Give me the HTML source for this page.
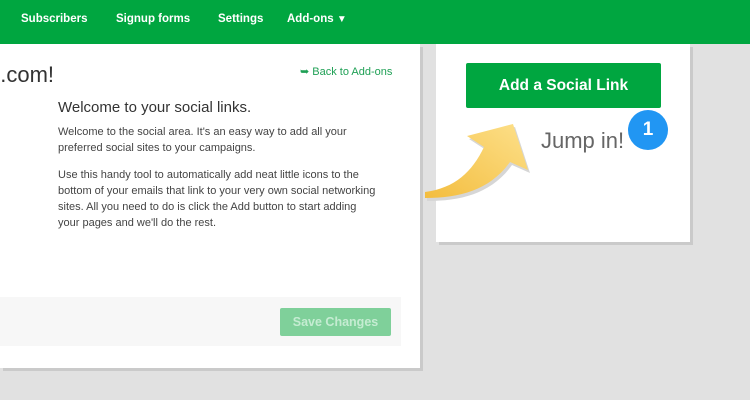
<!DOCTYPE html>
<html><head><style>
body{margin:0;width:750px;height:400px;background:#e1e1e1;position:relative;overflow:hidden;font-family:"Liberation Sans",Arial,sans-serif}
.hdr{position:absolute;left:0;top:0;width:750px;height:44px;background:#00a640}
.hdr span{position:absolute;top:13px;color:#fff;font-weight:bold;font-size:11.5px}
.lp{position:absolute;left:0;top:44px;width:420px;height:324px;background:#fff;box-shadow:3px 3px 0 #cacaca}
.rp{position:absolute;left:436px;top:44px;width:254px;height:198px;background:#fff;box-shadow:3px 3px 0 #cacaca}
p{margin:0}
</style></head><body>
<div class="hdr">
<span style="left:21px">Subscribers</span>
<span style="left:116px">Signup forms</span>
<span style="left:218px">Settings</span>
<span style="left:287px">Add-ons <span style="position:static;font-size:10px">▼</span></span>
</div>
<div class="lp">
<div style="position:absolute;left:-12px;top:18px;font-size:22px;color:#333">g.com!</div>
<div style="position:absolute;left:300px;top:21px;font-size:11px;color:#1fa055">➥ Back to Add-ons</div>
<div style="position:absolute;left:58px;top:55px;font-size:15px;color:#333">Welcome to your social links.</div>
<div style="position:absolute;left:58px;top:80px;width:320px;font-size:11px;line-height:16px;color:#444">
<p>Welcome to the social area. It's an easy way to add all your preferred social sites to your campaigns.</p>
<p style="margin-top:11px">Use this handy tool to automatically add neat little icons to the bottom of your emails that link to your very own social networking sites. All you need to do is click the Add button to start adding your pages and we'll do the rest.</p>
</div>
<div style="position:absolute;left:0;top:253px;width:401px;height:49px;background:#f7f7f7"></div>
<div style="position:absolute;left:280px;top:264px;width:111px;height:28px;background:#7fd09a;border-radius:2px;color:#c5ecd2;font-weight:bold;font-size:12.5px;text-align:center;line-height:28px">Save Changes</div>
</div>
<div class="rp">
<div style="position:absolute;left:30px;top:19px;width:195px;height:45px;background:#00a640;border-radius:2px;color:#fff;font-weight:bold;font-size:15.5px;text-align:center;line-height:45px">Add a Social Link</div>
<div style="position:absolute;left:105px;top:84px;font-size:22px;color:#666">Jump in!</div>
<div style="position:absolute;left:192px;top:66px;width:40px;height:40px;border-radius:50%;background:#2196f3;color:#fff;font-weight:bold;font-size:19px;text-align:center;line-height:40px">1</div>
</div>
<svg style="position:absolute;left:0;top:0" width="750" height="400">
<defs><linearGradient id="g" x1="0" y1="1" x2="1" y2="0"><stop offset="0" stop-color="#f3bd3f"/><stop offset="1" stop-color="#fde08a"/></linearGradient></defs>
<path d="M425 192 C455 188 472 172 484 147 L467 136 L513 124 L528 170 L510 162 C490 190 460 198 425 198 Z" fill="#d6d6d6" transform="translate(2,3)"/>
<path d="M425 192 C455 188 472 172 484 147 L467 136 L513 124 L528 170 L510 162 C490 190 460 198 425 198 Z" fill="url(#g)"/>
</svg>
</body></html>
